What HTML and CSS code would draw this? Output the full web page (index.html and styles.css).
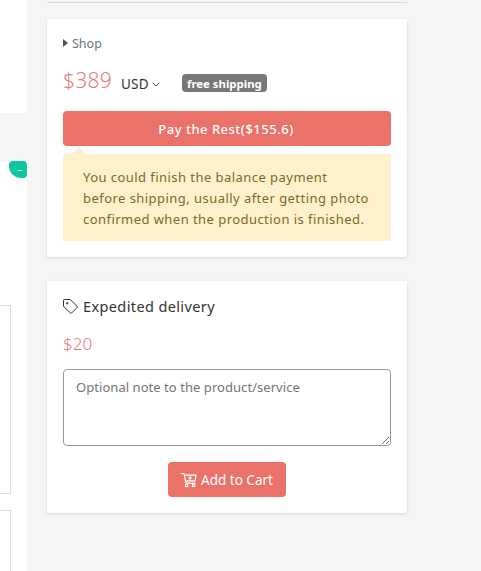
FILE: index.html
```html
<!DOCTYPE html>
<html lang="en">
<head>
    <meta charset="UTF-8">
    <meta name="viewport" content="width=device-width, initial-scale=1.0">
    <title>Shop</title>
    <link rel="stylesheet" href="styles.css">
</head>
<body>
    <div class="page">
        <main class="content">
            <div class="panel panel-top"></div>
            <div class="panel panel-list">
                <span class="ribbon">--</span>
                <div class="box"></div>
                <div class="box"></div>
            </div>
        </main>

        <aside class="sidebar">
            <hr class="divider">

            <section class="card">
                <a class="shop-link"><span class="caret"></span>Shop</a>
                <div class="price-row">
                    <span class="price">$389</span>
                    <span class="currency">USD
                        <svg width="8" height="8" viewBox="0 0 16 16" fill="none" stroke="currentColor" stroke-width="1.8" stroke-linecap="round" stroke-linejoin="round"><path d="M2 4l6 6 6-6"/></svg>
                    </span>
                    <span class="badge">free shipping</span>
                </div>
                <button class="btn btn-block">Pay the Rest($155.6)</button>
                <div class="notice">You could finish the balance payment before shipping, usually after getting photo confirmed when the production is finished.</div>
            </section>

            <section class="card card-delivery">
                <h2 class="title">
                    <svg width="15" height="15" viewBox="0 0 15 15" fill="none" stroke="currentColor" stroke-width="1" stroke-linejoin="round"><path d="M.5 1.2Q.5.5 1.2.5H7.3L14.2 7.5Q14.6 8 14.2 8.4L8.5 14.1Q8 14.6 7.5 14.1L.5 7.3Z"/><circle cx="4.2" cy="4.2" r=".8"/></svg>
                    <span>Expedited delivery</span>
                </h2>
                <div class="extra-price">$20</div>
                <textarea class="note" placeholder="Optional note to the product/service"></textarea>
                <button class="btn btn-cart">
                    <svg width="16" height="16" viewBox="0 0 16 16" fill="none" stroke="currentColor" stroke-width="1.2" stroke-linecap="round" stroke-linejoin="round"><path d="M.6 1.600H3L5 11.200H14M3.500 3.200H15.200L14 8.800H4.600M9 4v3.500M7.400 6H10.600"/><circle cx="5.600" cy="13.400" r="1.300"/><circle cx="12.600" cy="13.400" r="1.300"/></svg>
                    <span>Add to Cart</span>
                </button>
            </section>
        </aside>
    </div>
</body>
</html>
```
FILE: styles.css
```css
* {
    box-sizing: border-box;
}

body {
    margin: 0;
    background-color: #f5f5f5;
    color: #333;
    font-family: "Noto Sans", "Open Sans", sans-serif;
    font-size: 13px;
    overflow: hidden;
}

.page {
    display: flex;
    gap: 20px;
    height: 571px;
}

.content {
    display: flex;
    flex-direction: column;
    width: 27px;
    gap: 48px;
}

.panel {
    background-color: #fff;
}

.panel-top {
    height: 113px;
}

.panel-list {
    display: flex;
    flex-direction: column;
    flex: 1;
    min-height: 0;
    overflow: hidden;
}

.ribbon {
    align-self: flex-end;
    width: 18px;
    height: 17px;
    margin-bottom: 127px;
    border-radius: 4px 4px 4px 12px;
    background-color: #0fc6a0;
    color: #fff;
    font-size: 8px;
    line-height: 17px;
    text-align: center;
    padding-left: 3px;
}

.box {
    flex: none;
    width: 11px;
    height: 189px;
    margin-bottom: 16px;
    border: 1px solid #dcdcdc;
    border-left: 0;
}

.sidebar {
    width: 360px;
}

.divider {
    height: 1px;
    margin: 2px 0 16px;
    border: 0;
    background-color: #d9d9d9;
}

.card {
    height: 238px;
    padding: 14px 16px 16px;
    background-color: #fff;
    border-radius: 2px;
    box-shadow: 0 1px 3px rgba(0, 0, 0, 0.12);
}

.shop-link {
    display: flex;
    align-items: center;
    height: 20px;
    color: #6c757d;
    font-size: 12.5px;
}

.caret {
    margin-right: 4px;
    border: 4px solid transparent;
    border-left: 5px solid #555;
    border-right: 0;
}

.price-row {
    display: flex;
    align-items: center;
    height: 58px;
    padding-bottom: 5px;
}

.price {
    width: 58px;
    color: #e47c7a;
    font-size: 21px;
    font-weight: 350;
    letter-spacing: 0.3px;
}

.currency {
    width: 61px;
    padding-top: 9px;
    font-size: 13.5px;
    letter-spacing: 0.2px;
    white-space: nowrap;
}

.badge {
    height: 18px;
    margin-top: 6px;
    padding: 0 5px;
    border-radius: 4px;
    background-color: #777;
    color: #fff;
    font-size: 11.4px;
    font-weight: 700;
    line-height: 19px;
}

.btn {
    display: flex;
    align-items: center;
    justify-content: center;
    height: 35px;
    padding: 0;
    border: 0;
    border-radius: 4px;
    background-color: #eb7268;
    color: #fff;
    font-family: inherit;
    font-size: 13px;
}

.btn-block {
    width: 100%;
    padding-right: 2px;
    font-weight: 500;
    letter-spacing: 0.5px;
}

.notice {
    position: relative;
    height: 87px;
    margin-top: 8px;
    padding: 13px 20px 11px;
    border-radius: 2px;
    background-color: #fff1cc;
    color: #7d682b;
    font-size: 13px;
    line-height: 21px;
    letter-spacing: 0.45px;
}

.notice::before {
    content: '';
    position: absolute;
    top: -7px;
    left: 9px;
    border: 7px solid transparent;
    border-top: 0;
    border-bottom-color: #fff1cc;
}

.card-delivery {
    height: 232px;
    margin-top: 24px;
}

.title {
    display: flex;
    align-items: center;
    gap: 5px;
    height: 22px;
    margin: 0;
    font-size: 14.5px;
    font-weight: 400;
    letter-spacing: 0.38px;
}

.extra-price {
    height: 52px;
    color: #e0797b;
    font-size: 17px;
    font-weight: 300;
    line-height: 54px;
}

.note {
    display: block;
    width: 100%;
    height: 77px;
    padding: 8px 12px;
    border: 1px solid #999;
    border-radius: 4px;
    font-family: inherit;
    font-size: 13px;
    letter-spacing: 0.05px;
}

.note::placeholder {
    color: #757575;
}

.btn-cart {
    gap: 4px;
    width: 118px;
    margin: 16px auto 0;
    font-size: 13.5px;
}
```
